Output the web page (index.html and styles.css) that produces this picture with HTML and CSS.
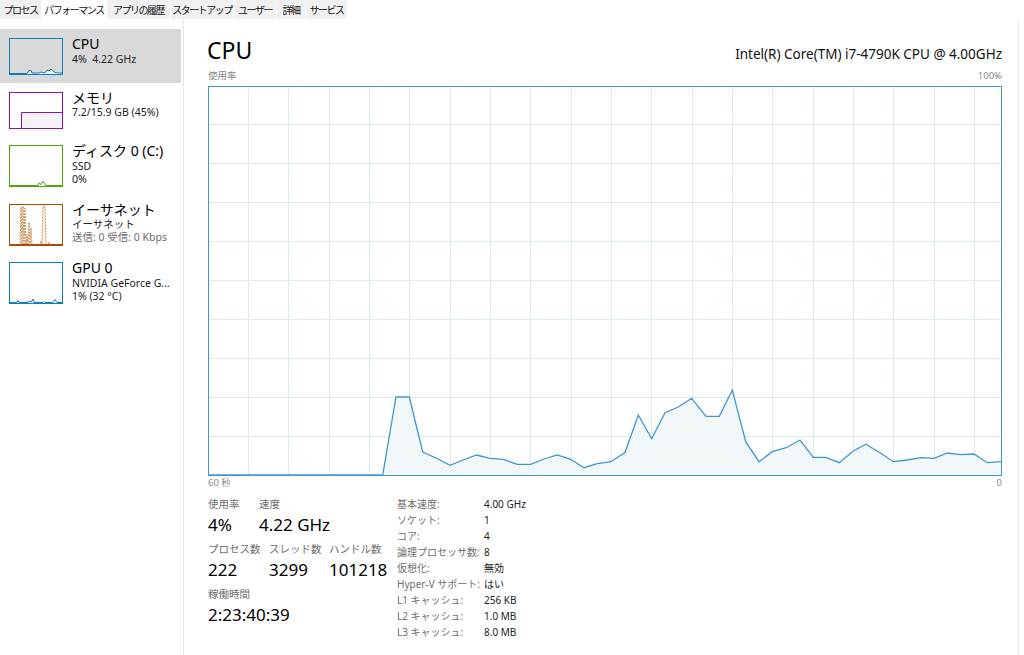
FILE: index.html
```html
<!DOCTYPE html>
<html lang="ja">
<head>
    <meta charset="UTF-8">
    <title>タスク マネージャー - パフォーマンス</title>
    <link rel="stylesheet" href="styles.css">
</head>
<body>
    <div class="tabs">
        <div class="tab">プロセス</div>
        <div class="tab active">パフォーマンス</div>
        <div class="tab">アプリの履歴</div>
        <div class="tab">スタートアップ</div>
        <div class="tab">ユーザー</div>
        <div class="tab">詳細</div>
        <div class="tab">サービス</div>
    </div>

    <div class="main">
        <aside class="sidebar">
            <div class="item selected">
                <svg class="thumb" width="54" height="37" viewBox="0 0 54 37">
                    <polygon fill="#f1f6fa" points="1,36 18,36 20,33 22,33 23,35 30,35 32,34 36,35 38,32 40,33 42,31 44,33 46,34.5 50,35 53,35 53,36"/>
                    <polyline fill="none" stroke="#117dbb" points="1,35.5 18,35.5 20,32.5 22,32.5 23,35 30,35 32,34 36,35 38,32 40,33 42,31 44,33 46,34.5 50,35 53,35"/>
                    <rect x="0.5" y="0.5" width="53" height="36" fill="none" stroke="#117dbb"/>
                </svg>
                <div class="info">
                    <div class="name">CPU</div>
                    <div class="sub">4%&nbsp; 4.22 GHz</div>
                </div>
            </div>
            <div class="item">
                <svg class="thumb" width="54" height="37" viewBox="0 0 54 37">
                    <rect x="12" y="20" width="41" height="16" fill="#f4f2f4"/>
                    <polyline fill="none" stroke="#8b12ae" points="12.5,36 12.5,20.5 53,20.5"/>
                    <rect x="0.5" y="0.5" width="53" height="36" fill="none" stroke="#8b12ae"/>
                </svg>
                <div class="info">
                    <div class="name">メモリ</div>
                    <div class="sub">7.2/15.9 GB (45%)</div>
                </div>
            </div>
            <div class="item">
                <svg class="thumb" width="54" height="42" viewBox="0 0 54 42">
                    <polyline fill="#eff7e7" stroke="#4da60c" points="1,40.5 29,40.5 30,38 32,39.5 34,36 36,38.5 37,40.5 53,40.5"/>
                    <rect x="0.5" y="0.5" width="53" height="41" fill="none" stroke="#4da60c"/>
                </svg>
                <div class="info">
                    <div class="name">ディスク 0 (C:)</div>
                    <div class="sub">SSD</div>
                    <div class="sub">0%</div>
                </div>
            </div>
            <div class="item">
                <svg class="thumb" width="54" height="42" viewBox="0 0 54 42">
                    <polyline fill="#fcf3eb" stroke="#b5651d" stroke-width="0.7" stroke-dasharray="2 1" points="1,41 11,41 12,3 13,41 14,2 15,40 16,4 17,41 18,30 19,41 20,18 21,41 22,24 23,41 31,41 32,37 33,41 34,2 36,2 37,41 39,41 40,38 41,41 53,41"/>
                    <line x1="1" y1="40.5" x2="53" y2="40.5" stroke="#a74f01"/>
                    <rect x="0.5" y="0.5" width="53" height="41" fill="none" stroke="#a74f01"/>
                </svg>
                <div class="info">
                    <div class="name">イーサネット</div>
                    <div class="sub">イーサネット</div>
                    <div class="sub muted">送信: 0 受信: 0 Kbps</div>
                </div>
            </div>
            <div class="item">
                <svg class="thumb" width="54" height="42" viewBox="0 0 54 42">
                    <polyline fill="#f1f6fa" stroke="#117dbb" points="1,40.5 8,40.5 9,38.5 10,40.5 19,40.5 20,39 22,40 24,37 25,40.5 34,40.5 35,39.5 36,40.5 44,40.5 46,37.5 48,40.5 53,40.5"/>
                    <rect x="0.5" y="0.5" width="53" height="41" fill="none" stroke="#117dbb"/>
                </svg>
                <div class="info">
                    <div class="name">GPU 0</div>
                    <div class="sub">NVIDIA GeForce G...</div>
                    <div class="sub">1% (32 °C)</div>
                </div>
            </div>
        </aside>

        <section class="detail">
            <div class="head">
                <h1>CPU</h1>
                <div class="model">Intel(R) Core(TM) i7-4790K CPU @ 4.00GHz</div>
            </div>
            <div class="axis">
                <span>使用率</span>
                <span>100%</span>
            </div>
            <div class="chart">
                <svg width="794" height="390" viewBox="0 0 794 390">
                    <g stroke="#d9eaf4" stroke-width="1">
                        <line x1="0" y1="38.5" x2="794" y2="38.5"/>
                        <line x1="0" y1="77.5" x2="794" y2="77.5"/>
                        <line x1="0" y1="116.5" x2="794" y2="116.5"/>
                        <line x1="0" y1="155.5" x2="794" y2="155.5"/>
                        <line x1="0" y1="194.5" x2="794" y2="194.5"/>
                        <line x1="0" y1="233.5" x2="794" y2="233.5"/>
                        <line x1="0" y1="272.5" x2="794" y2="272.5"/>
                        <line x1="0" y1="311.5" x2="794" y2="311.5"/>
                        <line x1="0" y1="350.5" x2="794" y2="350.5"/>
                        <line x1="40.5" y1="0" x2="40.5" y2="390"/>
                        <line x1="80.5" y1="0" x2="80.5" y2="390"/>
                        <line x1="121.5" y1="0" x2="121.5" y2="390"/>
                        <line x1="161.5" y1="0" x2="161.5" y2="390"/>
                        <line x1="201.5" y1="0" x2="201.5" y2="390"/>
                        <line x1="242.5" y1="0" x2="242.5" y2="390"/>
                        <line x1="282.5" y1="0" x2="282.5" y2="390"/>
                        <line x1="322.5" y1="0" x2="322.5" y2="390"/>
                        <line x1="363.5" y1="0" x2="363.5" y2="390"/>
                        <line x1="403.5" y1="0" x2="403.5" y2="390"/>
                        <line x1="443.5" y1="0" x2="443.5" y2="390"/>
                        <line x1="484.5" y1="0" x2="484.5" y2="390"/>
                        <line x1="524.5" y1="0" x2="524.5" y2="390"/>
                        <line x1="564.5" y1="0" x2="564.5" y2="390"/>
                        <line x1="605.5" y1="0" x2="605.5" y2="390"/>
                        <line x1="645.5" y1="0" x2="645.5" y2="390"/>
                        <line x1="685.5" y1="0" x2="685.5" y2="390"/>
                        <line x1="726.5" y1="0" x2="726.5" y2="390"/>
                        <line x1="766.5" y1="0" x2="766.5" y2="390"/>
                    </g>
                    <!-- last 60 seconds of usage -->
                    <polygon fill="#f1f6fa" fill-opacity="0.9" points="0,389 174.7,389 188,311 201.3,311 214.7,366 228,372 242,379.3 255,374 268.7,369 282,372.3 295.3,373.3 309.3,378.3 322.7,378.3 336,373 349.3,369 362.7,373.3 376,381.7 389.3,377.7 402.7,375.7 417,366.5 430.3,329 443.7,352.7 457,326.7 470.3,321 483.7,312.3 498,330.3 511.3,330.3 524.3,304 537.7,355.7 551,375.7 564.3,365.7 578,361.7 592,354 605.3,371.3 618,371.3 631.3,376.7 645.3,365 658,358.3 672,366.7 685.3,375.7 699.3,374 712.7,371.7 726,372.3 739.3,367 752.7,368.7 766,368 779.3,376.7 793,375.7 793,389"/>
                    <polyline fill="none" stroke="#3f96d2" stroke-width="1.3" points="0,389 174.7,389 188,311 201.3,311 214.7,366 228,372 242,379.3 255,374 268.7,369 282,372.3 295.3,373.3 309.3,378.3 322.7,378.3 336,373 349.3,369 362.7,373.3 376,381.7 389.3,377.7 402.7,375.7 417,366.5 430.3,329 443.7,352.7 457,326.7 470.3,321 483.7,312.3 498,330.3 511.3,330.3 524.3,304 537.7,355.7 551,375.7 564.3,365.7 578,361.7 592,354 605.3,371.3 618,371.3 631.3,376.7 645.3,365 658,358.3 672,366.7 685.3,375.7 699.3,374 712.7,371.7 726,372.3 739.3,367 752.7,368.7 766,368 779.3,376.7 793,375.7"/>
                    <rect x="0.5" y="0.5" width="793" height="389" fill="none" stroke="#3f96d2"/>
                </svg>
            </div>
            <div class="axis">
                <span>60 秒</span>
                <span>0</span>
            </div>

            <div class="stats">
                <div class="stats-left">
                    <div class="stat-row">
                        <div class="stat w-usage">
                            <div class="label">使用率</div>
                            <div class="value">4%</div>
                        </div>
                        <div class="stat">
                            <div class="label">速度</div>
                            <div class="value">4.22 GHz</div>
                        </div>
                    </div>
                    <div class="stat-row">
                        <div class="stat w-proc">
                            <div class="label">プロセス数</div>
                            <div class="value">222</div>
                        </div>
                        <div class="stat w-thread">
                            <div class="label">スレッド数</div>
                            <div class="value">3299</div>
                        </div>
                        <div class="stat">
                            <div class="label">ハンドル数</div>
                            <div class="value">101218</div>
                        </div>
                    </div>
                    <div class="stat-row">
                        <div class="stat">
                            <div class="label">稼働時間</div>
                            <div class="value">2:23:40:39</div>
                        </div>
                    </div>
                </div>
                <div class="specs">
                    <span class="k">基本速度:</span><span class="v">4.00 GHz</span>
                    <span class="k">ソケット:</span><span class="v">1</span>
                    <span class="k">コア:</span><span class="v">4</span>
                    <span class="k">論理プロセッサ数:</span><span class="v">8</span>
                    <span class="k">仮想化:</span><span class="v">無効</span>
                    <span class="k">Hyper-V サポート:</span><span class="v">はい</span>
                    <span class="k">L1 キャッシュ:</span><span class="v">256 KB</span>
                    <span class="k">L2 キャッシュ:</span><span class="v">1.0 MB</span>
                    <span class="k">L3 キャッシュ:</span><span class="v">8.0 MB</span>
                </div>
            </div>
        </section>
    </div>
</body>
</html>
```

FILE: styles.css
```css
body {
    margin: 0;
    background: #fff;
    font-family: "Noto Sans", "Noto Sans CJK JP", sans-serif;
    color: #000;
    font-size: 11px;
}

.tabs {
    display: grid;
    grid-template-columns: 41px 64px 63px 62px 42px 28px 41px;
    gap: 1px;
    height: 19px;
}

.tab {
    background: #f0f0f0;
    text-align: center;
    line-height: 19px;
    font-family: "Noto Sans CJK JP", sans-serif;
    font-size: 10px;
    letter-spacing: -1.5px;
    white-space: nowrap;
    color: #111;
}

.tab.active {
    background: #fff;
}

.main {
    display: flex;
    height: 636px;
}

.sidebar {
    width: 183px;
    border-right: 1px solid #e6e6e6;
    padding-top: 10px;
}

.item {
    display: flex;
    align-items: flex-start;
    gap: 9px;
    padding: 9px 0 7.5px 9px;
    margin-right: 2px;
}

.item.selected {
    background: #d9d9d9;
}

.thumb {
    display: block;
    flex: none;
}

.info {
    margin-top: -2px;
    white-space: nowrap;
}

.name {
    font-size: 14px;
    line-height: 16.5px;
}

.sub {
    font-size: 10.5px;
    line-height: 13px;
    color: #222;
}

.sub.muted {
    color: #6d6d6d;
}

.detail {
    flex: 1;
    padding: 20px 16px 0 24px;
    border-right: 1px solid #ededed;
    margin-right: 5px;
}

.head {
    display: flex;
    justify-content: space-between;
    align-items: baseline;
}

h1 {
    margin: 0 0 0 -1px;
    font-size: 23px;
    line-height: 23px;
    font-weight: normal;
}

.model {
    font-size: 13.5px;
    color: #111;
}

.axis {
    display: flex;
    justify-content: space-between;
    width: 794px;
    font-size: 9.5px;
    line-height: 14px;
    color: #8a8a8a;
}

.head + .axis {
    margin-top: 6px;
    margin-bottom: 3px;
}

.chart svg {
    display: block;
}

.stats {
    display: flex;
    margin-top: 5px;
}

.stats-left {
    width: 189px;
}

.stat-row {
    display: flex;
    margin-bottom: 3px;
}

.w-usage {
    width: 51px;
}

.w-proc {
    width: 61px;
}

.w-thread {
    width: 60px;
}

.label {
    font-size: 10.5px;
    line-height: 18px;
    color: #6d6d6d;
}

.value {
    font-size: 17px;
    line-height: 24px;
    white-space: nowrap;
}

.specs {
    display: grid;
    grid-template-columns: 87px auto;
    font-size: 10px;
    line-height: 16px;
    margin-top: 1px;
}

.specs .k {
    color: #6d6d6d;
}

.specs .v {
    color: #222;
}
```
